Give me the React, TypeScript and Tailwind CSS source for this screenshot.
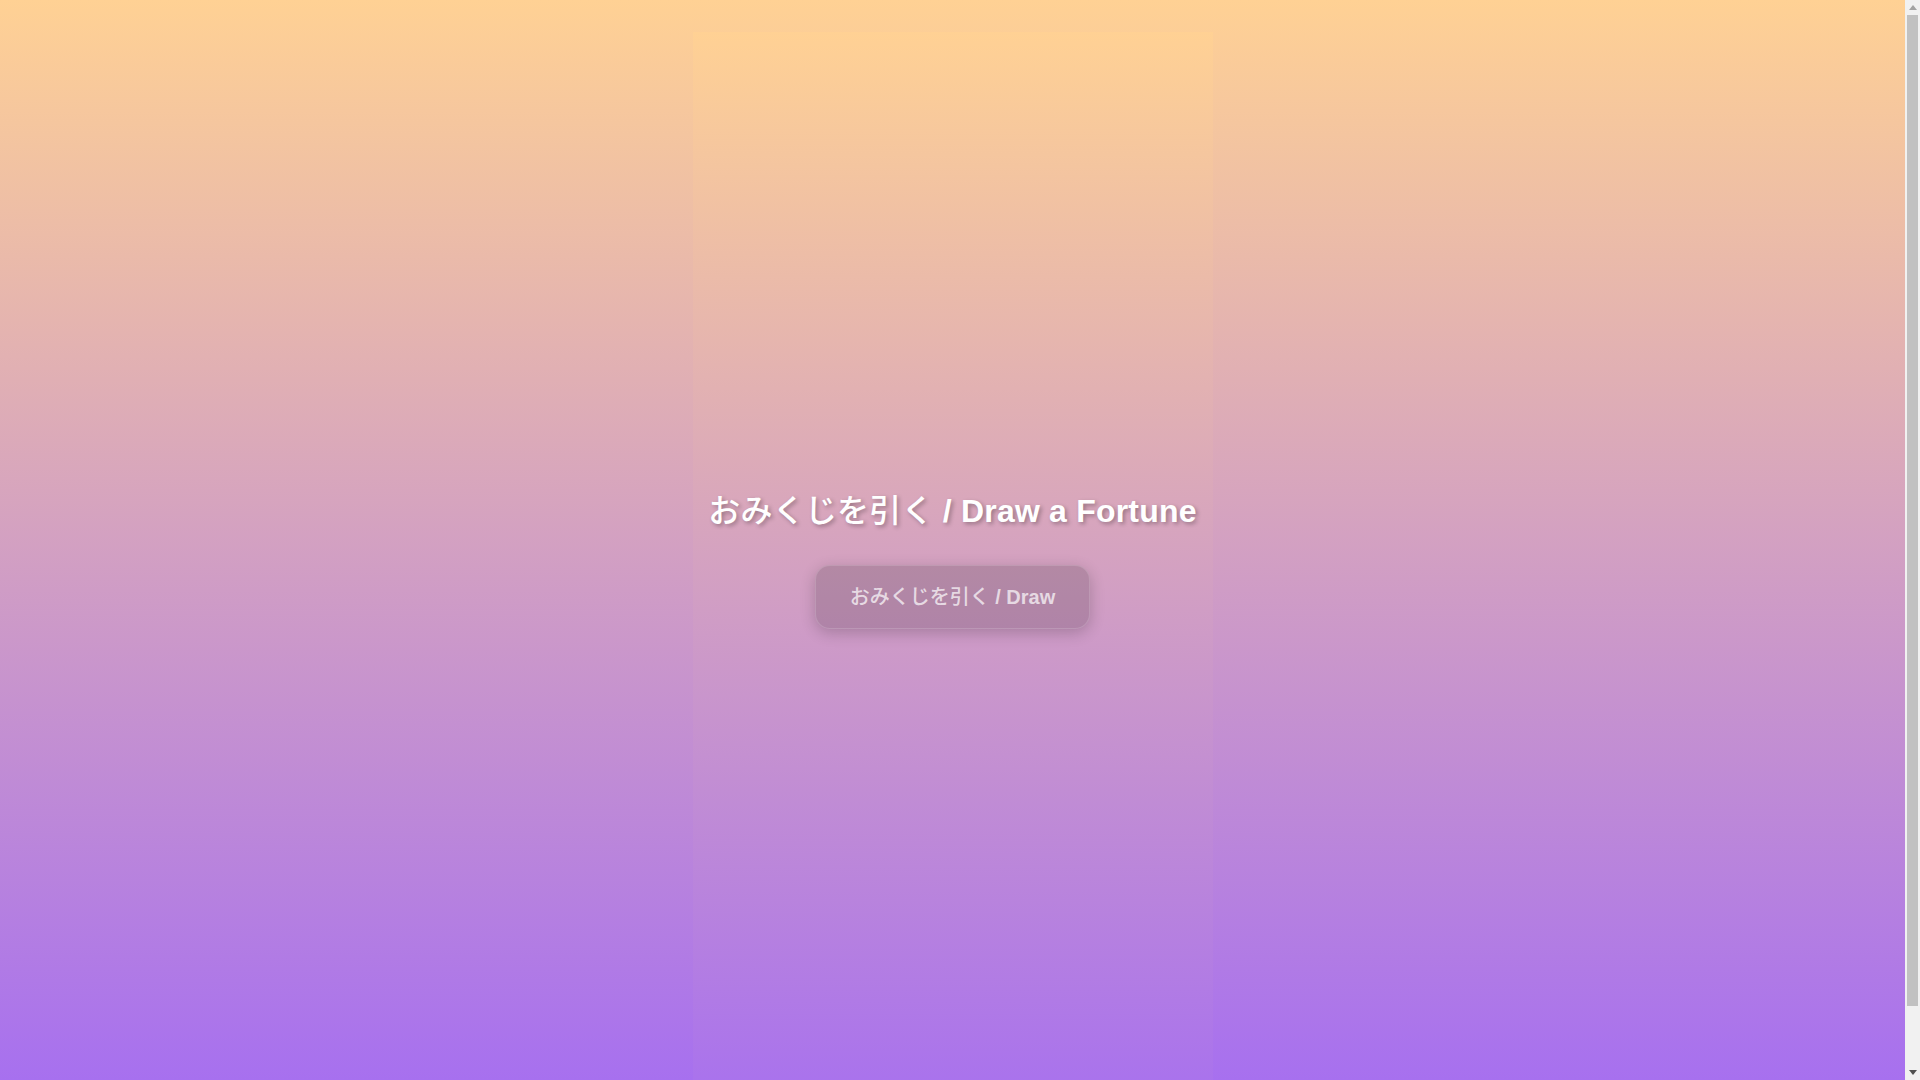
import React from "react";

export default function App() {
  return (
    <div
      className="flex h-screen w-full overflow-hidden"
      style={{ fontFamily: '"Liberation Sans", "Noto Sans CJK JP", sans-serif' }}
    >
      <main className="h-screen flex-1 overflow-hidden bg-[linear-gradient(180deg,#ffd194_0%,#a770ef_100%)]">
        <div className="mx-auto my-8 flex min-h-screen w-[520px] flex-col items-center justify-center bg-[linear-gradient(180deg,#ffd194_0%,#a770ef_100%)] pb-[28px]">
          <h1 className="mb-[30px] text-[32px] font-bold tracking-[0.2px] text-white [text-shadow:2px_2px_4px_rgba(0,0,0,0.3)]">
            <span className="font-medium">おみくじを引く</span> / Draw a Fortune
          </h1>
          <button className="rounded-[15px] border border-white/15 bg-black/15 px-[34px] py-4 text-[20px] font-bold text-white/70 shadow-[0_4px_15px_rgba(0,0,0,0.2)]">
            <span className="font-medium">おみくじを引く</span> / Draw
          </button>
        </div>
      </main>
      <div className="flex h-screen w-[15px] flex-col bg-[#f1f1f1]">
        <div className="flex h-[15px] items-center justify-center">
          <svg width="8" height="5" viewBox="0 0 8 5">
            <polygon points="4,0 8,5 0,5" fill="#a3a3a3" />
          </svg>
        </div>
        <div className="mx-[2px] h-[991px] bg-[#c1c1c1]" />
        <div className="flex-1" />
        <div className="flex h-[15px] items-center justify-center">
          <svg width="8" height="5" viewBox="0 0 8 5">
            <polygon points="0,0 8,0 4,5" fill="#505050" />
          </svg>
        </div>
      </div>
    </div>
  );
}
